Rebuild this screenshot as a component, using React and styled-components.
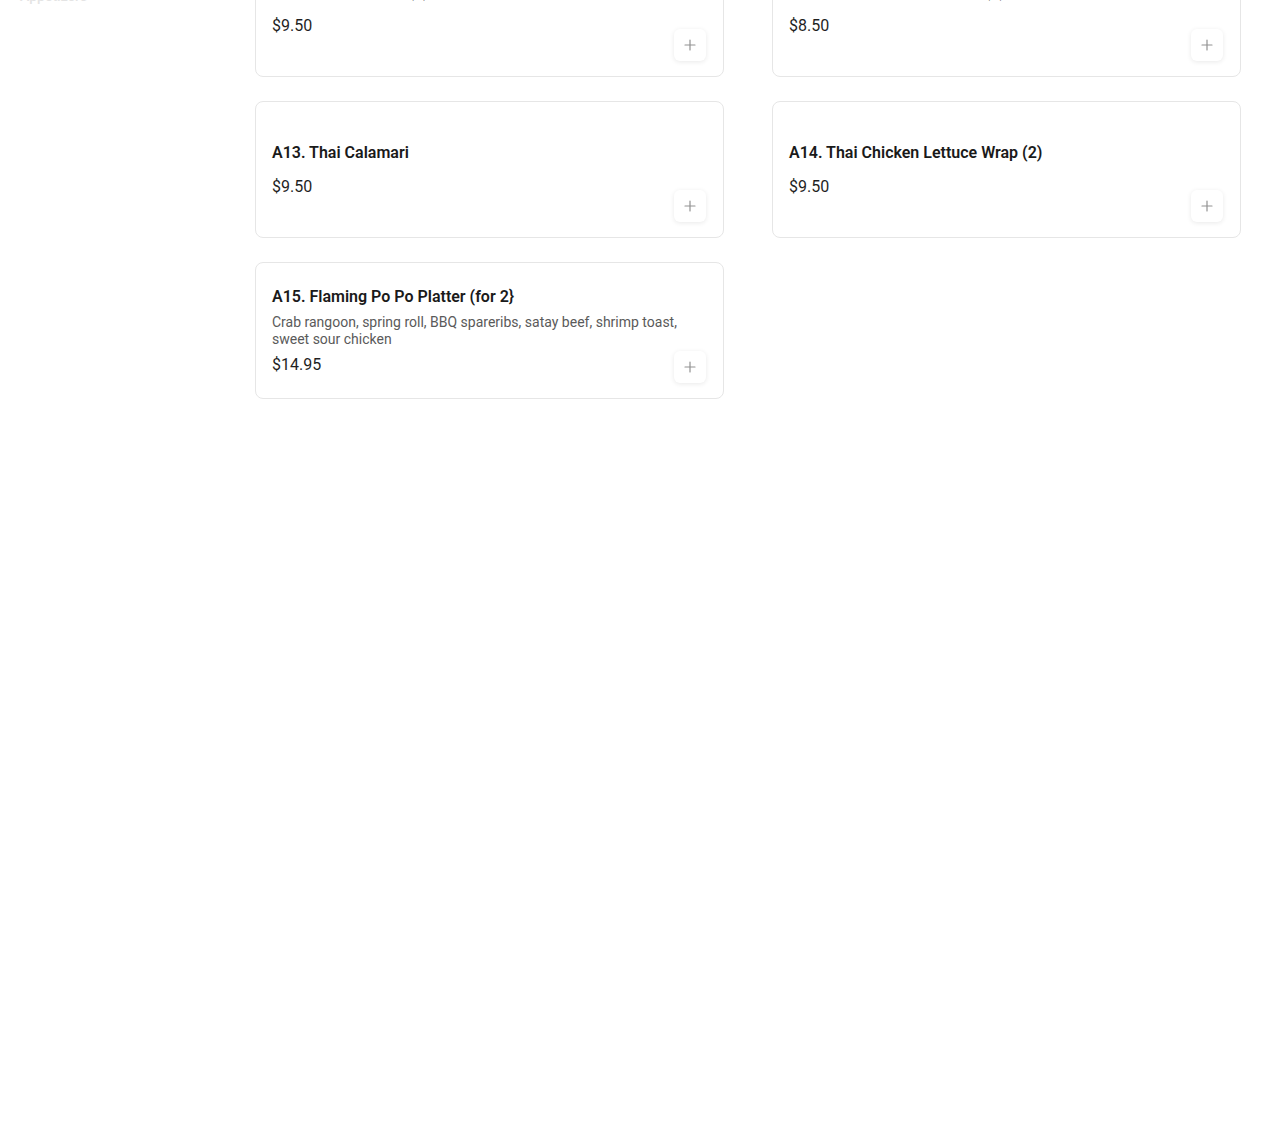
import React from "react";
import styled, { createGlobalStyle } from "styled-components";

const Global = createGlobalStyle`
  html, body { margin: 0; padding: 0; background: #ffffff; }
  body { font-family: Roboto, "Liberation Sans", Arial, sans-serif; color: #1a1a1a; }
  * { box-sizing: border-box; }
`;

const Page = styled.div`
  display: flex;
  align-items: flex-start;
  margin-top: -60px; /* page is shown scrolled down */
  min-height: 1199px;
`;

const Sidebar = styled.nav`
  width: 255px;
  flex: 0 0 255px;
  padding: 18px 20px 0 20px;
  display: flex;
  flex-direction: column;
`;

const SideItem = styled.div`
  font-size: 14px;
  line-height: 20px;
  height: 28px;
  color: #e4e4e4;
  font-weight: 500;
`;

const Main = styled.main`
  flex: 1;
  padding-right: 29px;
`;

const Grid = styled.div`
  display: grid;
  grid-template-columns: 469px 469px;
  column-gap: 48px;
  row-gap: 24px;
`;

const Card = styled.div`
  position: relative;
  min-height: 137px;
  border: 1px solid #e6e6e6;
  border-radius: 8px;
  background: #fff;
  padding: 16px;
  display: flex;
  flex-direction: column;
  justify-content: center;
`;

const Title = styled.div`
  font-size: 16px;
  line-height: 24px;
  font-weight: 600;
  color: #1a1a1a;
  margin-bottom: 5px;
`;

const Desc = styled.div`
  font-size: 14px;
  line-height: 17px;
  color: #5a5a5a;
  margin-bottom: 5px;
`;

const Price = styled.div`
  font-size: 16px;
  line-height: 24px;
  color: #1f1f1f;
`;

const AddButton = styled.button`
  position: absolute;
  right: 17px;
  bottom: 15px;
  width: 32px;
  height: 32px;
  border: none;
  border-radius: 6px;
  background: #fff;
  box-shadow: 0 1px 5px rgba(0, 0, 0, 0.09);
  display: flex;
  align-items: center;
  justify-content: center;
  padding: 0;
  cursor: pointer;
`;

const PlusIcon = () => (
  <svg width="12" height="12" viewBox="0 0 12 12" fill="none">
    <path d="M6 1v10M1 6h10" stroke="#929292" strokeWidth="1.2" strokeLinecap="round" />
  </svg>
);

const items = [
  { title: "A11. Shrimp Toast (2)", price: "$9.50" },
  { title: "A12. Vegetable Spring Roll (2)", price: "$8.50" },
  { title: "A13. Thai Calamari", price: "$9.50" },
  { title: "A14. Thai Chicken Lettuce Wrap (2)", price: "$9.50" },
  {
    title: "A15. Flaming Po Po Platter (for 2}",
    desc: "Crab rangoon, spring roll, BBQ spareribs, satay beef, shrimp toast, sweet sour chicken",
    price: "$14.95",
  },
];

export default function App() {
  return (
    <>
      <Global />
      <Page>
        <Sidebar>
          <SideItem>Popular Items</SideItem>
          <SideItem>Appetizers</SideItem>
        </Sidebar>
        <Main>
          <Grid>
            {items.map((it) => (
              <Card key={it.title}>
                <Title>{it.title}</Title>
                <Desc>{it.desc}</Desc>
                <Price>{it.price}</Price>
                <AddButton aria-label="Add">
                  <PlusIcon />
                </AddButton>
              </Card>
            ))}
          </Grid>
        </Main>
      </Page>
    </>
  );
}
